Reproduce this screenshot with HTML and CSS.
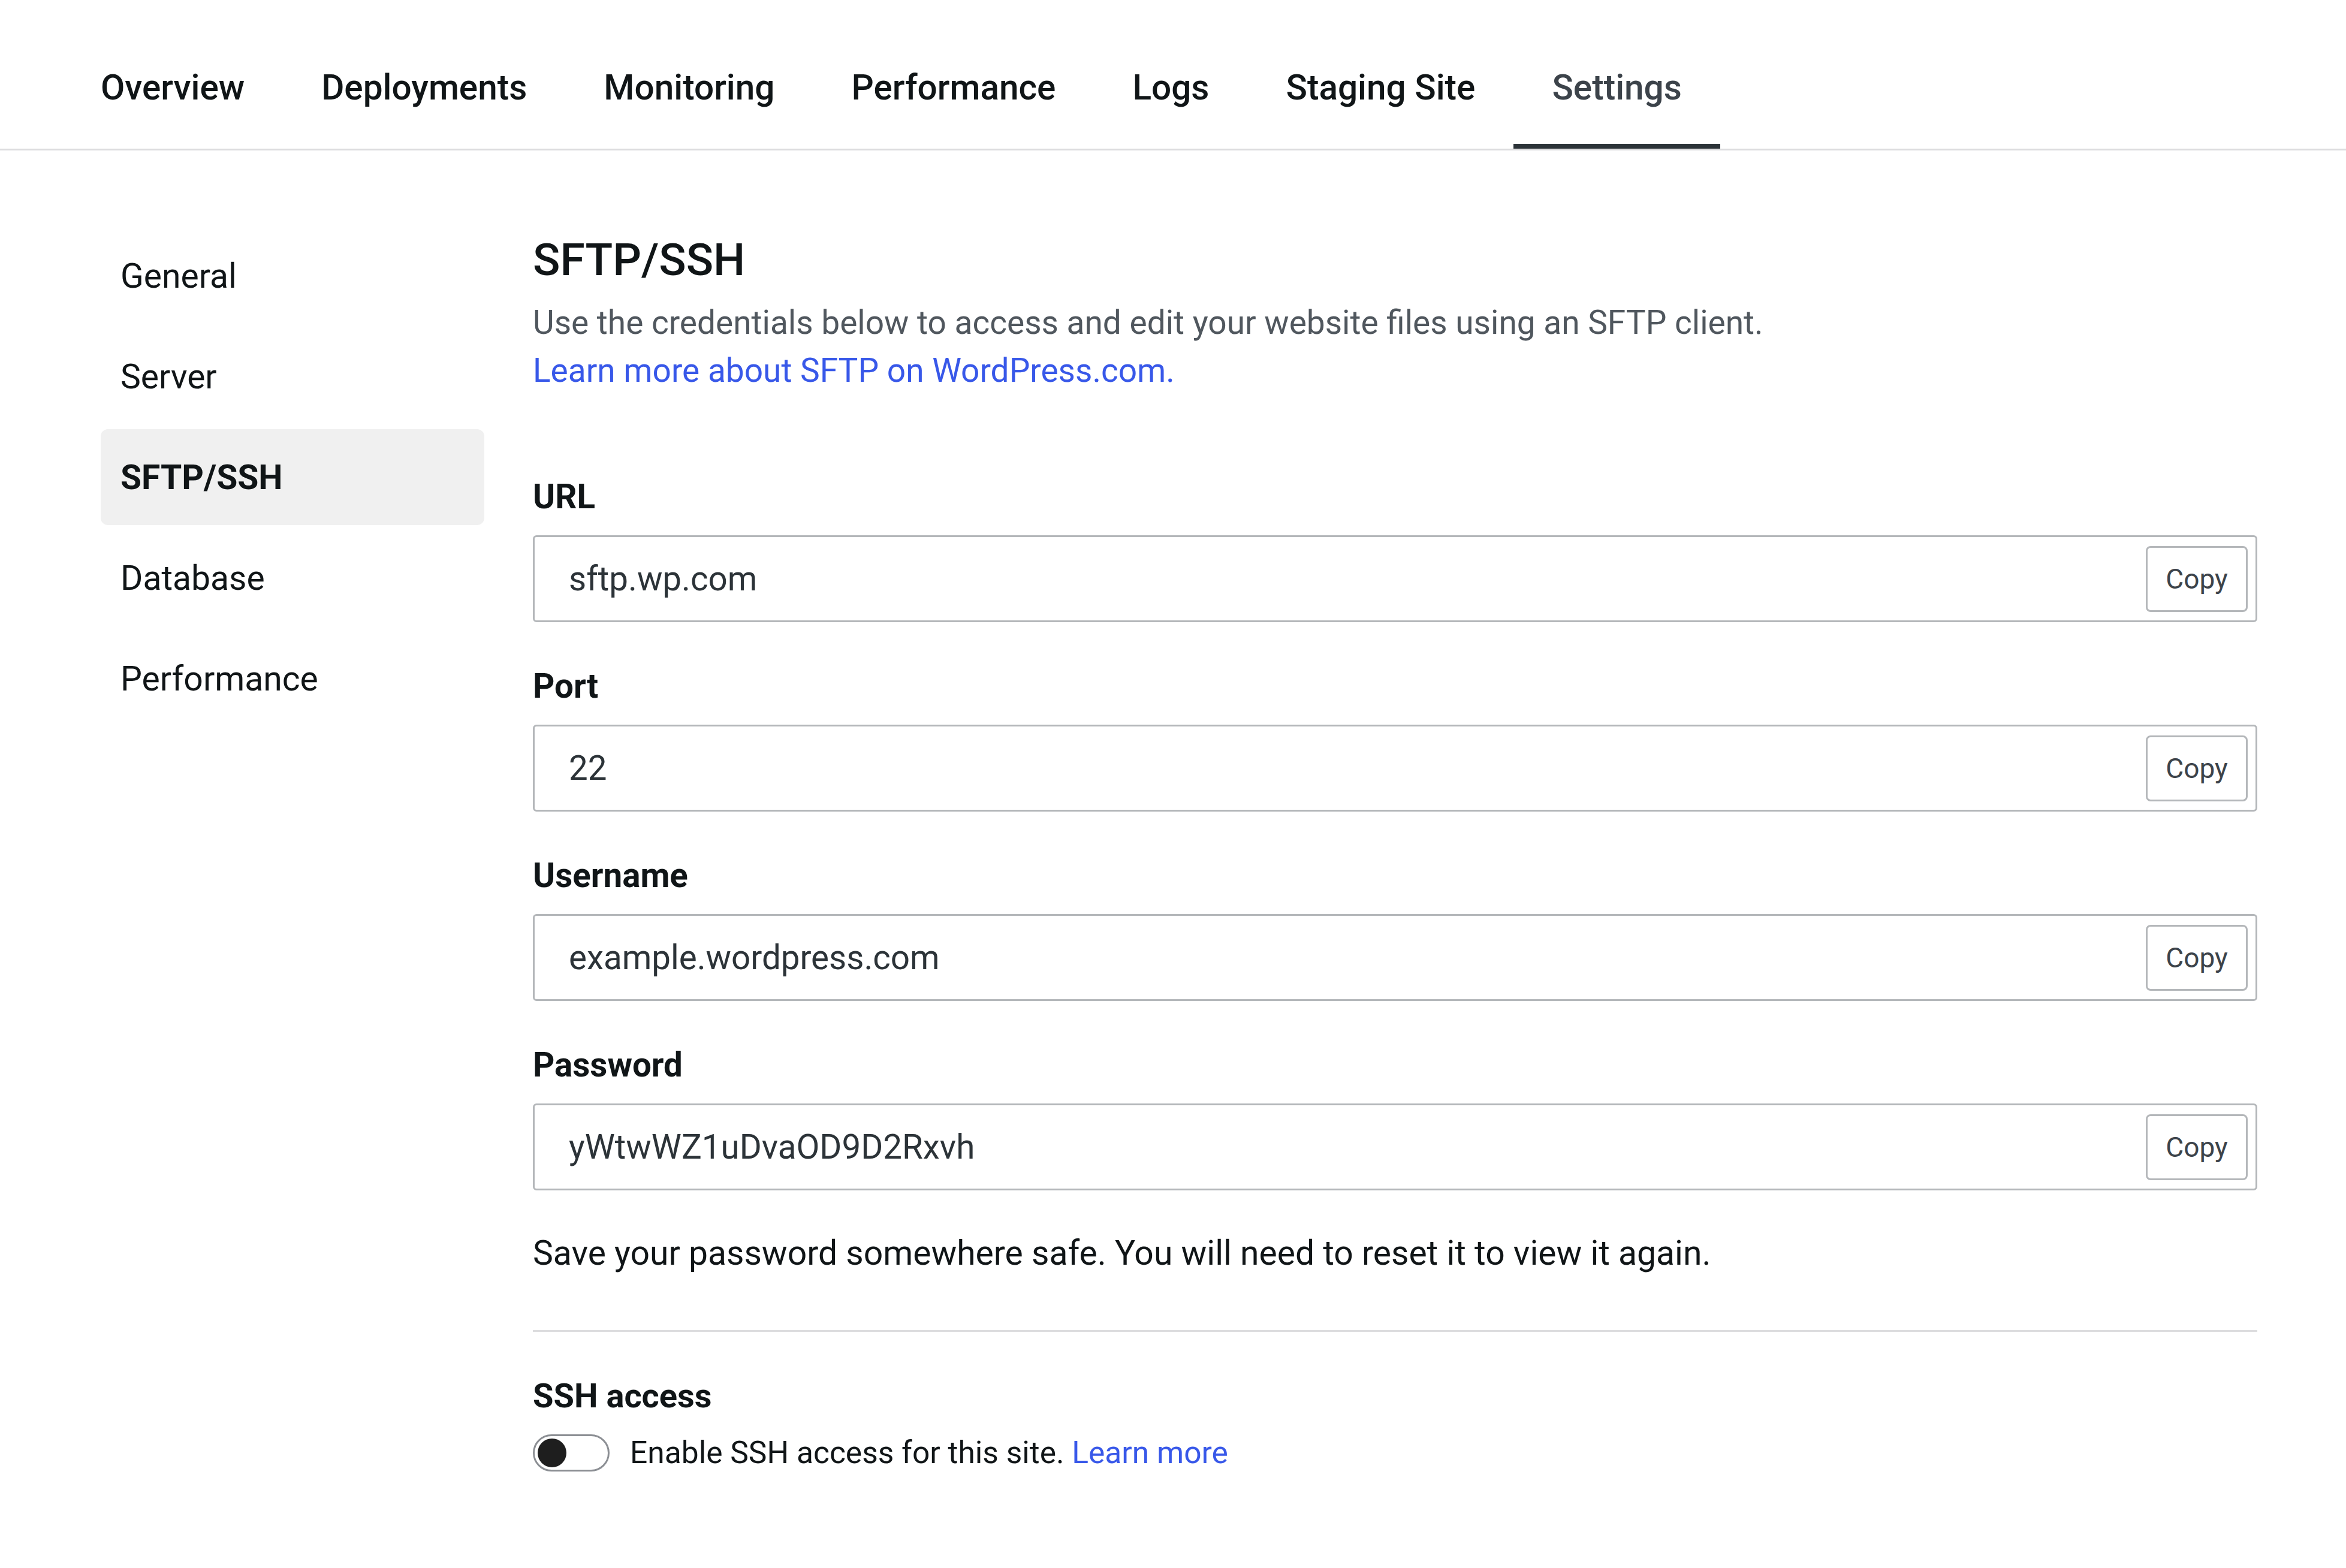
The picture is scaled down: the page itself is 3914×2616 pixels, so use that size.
FILE: index.html
```html
<!DOCTYPE html>
<html lang="en">
<head>
<meta charset="utf-8">
<title>SFTP/SSH Settings</title>
<link rel="stylesheet" href="styles.css">
</head>
<body>
<nav class="tabs">
  <a class="tab">Overview</a>
  <a class="tab">Deployments</a>
  <a class="tab">Monitoring</a>
  <a class="tab">Performance</a>
  <a class="tab">Logs</a>
  <a class="tab">Staging Site</a>
  <a class="tab tab-active">Settings</a>
</nav>
<div class="layout">
  <aside class="sidebar">
    <a class="side-item">General</a>
    <a class="side-item">Server</a>
    <a class="side-item side-active">SFTP/SSH</a>
    <a class="side-item">Database</a>
    <a class="side-item">Performance</a>
  </aside>
  <main class="content">
    <h1 class="title">SFTP/SSH</h1>
    <p class="desc">Use the credentials below to access and edit your website files using an SFTP client.<br><a class="link">Learn more about SFTP on WordPress.com.</a></p>

    <div class="field">
      <div class="label">URL</div>
      <div class="input"><span class="value">sftp.wp.com</span><button class="copy">Copy</button></div>
    </div>
    <div class="field">
      <div class="label">Port</div>
      <div class="input"><span class="value">22</span><button class="copy">Copy</button></div>
    </div>
    <div class="field">
      <div class="label">Username</div>
      <div class="input"><span class="value">example.wordpress.com</span><button class="copy">Copy</button></div>
    </div>
    <div class="field">
      <div class="label">Password</div>
      <div class="input"><span class="value">yWtwWZ1uDvaOD9D2Rxvh</span><button class="copy">Copy</button></div>
    </div>

    <p class="note">Save your password somewhere safe. You will need to reset it to view it again.</p>
    <hr class="divider">
    <div class="label ssh-label">SSH access</div>
    <div class="toggle-row">
      <span class="toggle"><span class="knob"></span></span>
      <span class="toggle-text">Enable SSH access for this site. <a class="link">Learn more</a></span>
    </div>
  </main>
</div>
</body>
</html>
```
FILE: styles.css
```css
html, body {
  margin: 0;
  padding: 0;
  background: #ffffff;
}
body {
  font-family: Roboto, "Noto Sans", sans-serif;
  color: #101517;
  width: 3914px;
}
a { text-decoration: none; cursor: pointer; }

.tabs {
  display: flex;
  padding-left: 104px;
  border-bottom: 3px solid #dcdcde;
  height: 248px;
  box-sizing: content-box;
}
.tab {
  display: block;
  padding: 106px 64px 0;
  height: 142px;
  font-size: 58.5px;
  line-height: 80px;
  font-weight: 500;
  color: #101517;
  box-sizing: content-box;
}
.tab-active {
  color: #3c434a;
  height: 134px;
  border-bottom: 8px solid #2c3338;
}

.layout {
  display: flex;
  padding-top: 129px;
}
.sidebar {
  display: flex;
  flex-direction: column;
  gap: 8px;
  width: 640px;
  margin-left: 168px;
  flex: none;
}
.side-item {
  display: flex;
  align-items: center;
  height: 160px;
  padding-left: 33px;
  border-radius: 12px;
  font-size: 57px;
  color: #101517;
}
.side-active {
  background: #f0f0f0;
  font-weight: 700;
}

.content {
  margin-left: 81px;
  width: 2877px;
  padding-top: 3px;
}
.title {
  margin: 0;
  font-size: 75px;
  line-height: 100px;
  font-weight: 500;
  color: #101517;
}
.desc {
  margin: 15px 0 0;
  font-size: 55px;
  line-height: 80px;
  color: #50575e;
}
.link { color: #3858e9; }

.field {
  display: flex;
  flex-direction: column;
  gap: 24px;
  margin-top: 67px;
}
.field:first-of-type { margin-top: 131px; }
.label {
  font-size: 56.5px;
  line-height: 80px;
  font-weight: 700;
  color: #101517;
}
.input {
  display: flex;
  align-items: center;
  justify-content: space-between;
  height: 145px;
  box-sizing: border-box;
  border: 3px solid #b4b7ba;
  border-radius: 6px;
  padding: 0 13px 0 57px;
}
.value {
  font-size: 56.5px;
  color: #2c3338;
}
.copy {
  width: 170px;
  height: 110px;
  box-sizing: border-box;
  border: 3px solid #b4b7ba;
  border-radius: 8px;
  background: #ffffff;
  font-family: Roboto, "Noto Sans", sans-serif;
  font-size: 46px;
  color: #3c434a;
  padding: 0;
}

.note {
  margin: 65px 0 0;
  font-size: 57px;
  line-height: 80px;
  color: #101517;
}
.divider {
  margin: 88px 0 0;
  border: 0;
  border-top: 3px solid #dcdcde;
  height: 0;
}
.ssh-label { margin-top: 67px; font-size: 56px; }
.toggle-row {
  display: flex;
  align-items: center;
  gap: 34px;
  margin-top: 15px;
  height: 80px;
}
.toggle {
  display: flex;
  align-items: center;
  width: 128px;
  height: 62px;
  box-sizing: border-box;
  border: 3px solid #8c8f94;
  border-radius: 31px;
  padding-left: 5px;
  background: #ffffff;
}
.knob {
  width: 48px;
  height: 48px;
  border-radius: 50%;
  background: #1e1e1e;
}
.toggle-text {
  font-size: 51.5px;
  line-height: 80px;
  color: #101517;
}
```
